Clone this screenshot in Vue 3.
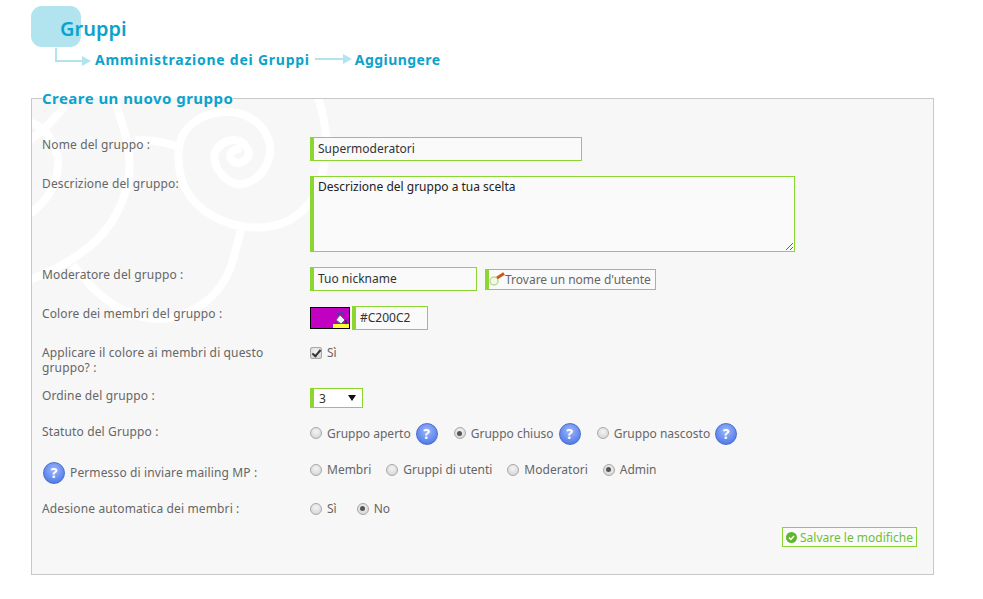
<script setup>
import { ref } from 'vue'

const nome = ref('Supermoderatori')
const descrizione = ref('Descrizione del gruppo a tua scelta')
const moderatore = ref('Tuo nickname')
const colore = ref('#C200C2')
const applica = ref(true)
const ordine = ref(3)
const statuto = ref('chiuso')
const permesso = ref('admin')
const adesione = ref('no')

const statuti = [
  { value: 'aperto', label: 'Gruppo aperto' },
  { value: 'chiuso', label: 'Gruppo chiuso' },
  { value: 'nascosto', label: 'Gruppo nascosto' }
]
const permessi = [
  { value: 'membri', label: 'Membri' },
  { value: 'gruppi', label: 'Gruppi di utenti' },
  { value: 'moderatori', label: 'Moderatori' },
  { value: 'admin', label: 'Admin' }
]
const adesioni = [
  { value: 'si', label: 'Sì' },
  { value: 'no', label: 'No' }
]

// curve of the background swirl, smoothed through its points
const smooth = (pts) => {
  let d = `M${pts[0][0]} ${pts[0][1]}`
  for (let i = 1; i < pts.length - 1; i++) {
    const mx = (pts[i][0] + pts[i + 1][0]) / 2
    const my = (pts[i][1] + pts[i + 1][1]) / 2
    d += ` Q${pts[i][0]} ${pts[i][1]} ${mx} ${my}`
  }
  const last = pts[pts.length - 1]
  return d + ` L${last[0]} ${last[1]}`
}

const swirl = [
  [[241, 148], [232, 150], [229, 158], [238, 165], [252, 155], [240, 138], [220, 143], [212, 158], [222, 177], [240, 187], [263, 175], [273, 148], [260, 122], [233, 110], [203, 115], [182, 132], [177, 158], [183, 188], [203, 212], [237, 227], [270, 228], [296, 218], [317, 195], [327, 155], [325, 122], [318, 97]],
  [[135, 140], [155, 140], [180, 147]],
  [[65, 106], [47, 127], [30, 140]],
  [[30, 122], [45, 128], [58, 152], [58, 175], [48, 198], [30, 214]],
  [[113, 96], [131, 145], [128, 192], [105, 235], [68, 263], [30, 280]],
  [[73, 265], [100, 300], [150, 322], [193, 313], [227, 283], [241, 230]]
].map(smooth)
</script>

<template>
  <div class="page">
    <header class="top">
      <span class="blob"></span>
      <h1>Gruppi</h1>
      <nav class="crumbs">
        <svg class="arrow-first" width="36" height="16" viewBox="0 0 36 16">
          <path d="M1 0V13H34" fill="none" stroke="#b2e4f0" stroke-width="2" />
          <path d="M27 8L36 13L27 18Z" fill="#b2e4f0" />
        </svg>
        <a>Amministrazione dei Gruppi</a>
        <svg class="arrow" width="37" height="10" viewBox="0 0 37 10">
          <path d="M0 5H30" stroke="#b2e4f0" stroke-width="2" />
          <path d="M28 0L37 5L28 10Z" fill="#b2e4f0" />
        </svg>
        <a class="last">Aggiungere</a>
      </nav>
    </header>

    <fieldset class="box">
      <legend>Creare un nuovo gruppo</legend>
      <div class="body">
        <svg class="swirl" width="901" height="476" viewBox="32 99 901 476">
          <path v-for="d in swirl" :key="d" :d="d" fill="none" stroke="#fff" stroke-width="8" />
        </svg>

        <div class="row">
          <label>Nome del gruppo :</label>
          <input class="field nome" type="text" v-model="nome" />
        </div>

        <div class="row">
          <label>Descrizione del gruppo:</label>
          <textarea class="field area" v-model="descrizione"></textarea>
        </div>

        <div class="row">
          <label>Moderatore del gruppo :</label>
          <div class="line">
            <input class="field mod" type="text" v-model="moderatore" />
            <button class="find" type="button">
              <svg width="20" height="14" viewBox="0 0 20 14">
                <circle cx="5" cy="9" r="4" fill="#f3f8ea" stroke="#b8dc92" stroke-width="1.5" />
                <path d="M8 6L15 1.5" stroke="#c9581c" stroke-width="3" />
              </svg>
              Trovare un nome d'utente
            </button>
          </div>
        </div>

        <div class="row">
          <label>Colore dei membri del gruppo :</label>
          <div class="line colors">
            <span class="swatch" :style="{ background: colore }">
              <span class="swatch-bar"></span>
              <svg class="bucket" width="12" height="13" viewBox="0 0 12 13">
                <path d="M5 3L10 8L6 12L1 8Z" fill="#f4f4f8" stroke="#5a5590" stroke-width="1" />
                <path d="M3 4L4 1L7 0.5L9 4" fill="none" stroke="#4a3f9c" stroke-width="1.5" />
                <path d="M10.5 8L11.5 12" stroke="#2f2a66" stroke-width="1.5" />
              </svg>
            </span>
            <input class="field hex" type="text" v-model="colore" />
          </div>
        </div>

        <div class="row row-check">
          <label>Applicare il colore ai membri di questo gruppo? :</label>
          <label class="opt opt-check">
            <input class="check" type="checkbox" v-model="applica" />
            Sì
          </label>
        </div>

        <div class="row row-order">
          <label>Ordine del gruppo :</label>
          <div class="select-wrap">
            <select class="field order" v-model="ordine">
              <option v-for="n in 5" :key="n" :value="n">{{ n }}</option>
            </select>
          </div>
        </div>

        <div class="row row-status">
          <label class="status-label">Statuto del Gruppo :</label>
          <div class="opts opts-status">
            <div class="opt-help" v-for="s in statuti" :key="s.value">
              <label class="opt">
                <input class="radio" type="radio" name="statuto" :value="s.value" v-model="statuto" />
                {{ s.label }}
              </label>
              <span class="help">?</span>
            </div>
          </div>
        </div>

        <div class="row row-mail">
          <label class="mail-label"><span class="help">?</span>Permesso di inviare mailing MP :</label>
          <div class="opts opts-mail">
            <label class="opt" v-for="p in permessi" :key="p.value">
              <input class="radio" type="radio" name="permesso" :value="p.value" v-model="permesso" />
              {{ p.label }}
            </label>
          </div>
        </div>

        <div class="row row-auto">
          <label>Adesione automatica dei membri :</label>
          <div class="opts opts-auto">
            <label class="opt" v-for="a in adesioni" :key="a.value">
              <input class="radio" type="radio" name="adesione" :value="a.value" v-model="adesione" />
              {{ a.label }}
            </label>
          </div>
        </div>

        <div class="actions">
          <button class="save" type="button">
            <svg width="11" height="11" viewBox="0 0 11 11">
              <circle cx="5.5" cy="5.5" r="5.5" fill="#5cb82a" />
              <path d="M3 5.6L4.9 7.5L8 3.9" fill="none" stroke="#fff" stroke-width="1.5" />
            </svg>
            Salvare le modifiche
          </button>
        </div>
      </div>
    </fieldset>
  </div>
</template>

<style>
html, body {
  margin: 0;
  background: #fff;
  overflow: hidden;
}
</style>

<style scoped>
.page {
  padding: 6px 49px 0 31px;
  font-family: "Noto Sans", "DejaVu Sans", sans-serif;
  font-size: 12px;
  color: #666;
}

/* title and breadcrumb */
.top {
  position: relative;
  height: 82px;
}
.blob {
  position: absolute;
  left: 0;
  top: 0;
  width: 50px;
  height: 41px;
  border-radius: 11px;
  background: #b2e4f0;
}
h1 {
  position: relative;
  margin: 0;
  padding: 10px 0 0 29px;
  font-size: 20px;
  line-height: 26px;
  font-weight: 600;
  color: #0ba3cd;
}
.crumbs {
  display: flex;
  align-items: center;
  height: 20px;
  margin-top: 7px;
  padding-left: 24px;
  font-size: 14px;
  font-weight: 700;
  letter-spacing: 0.75px;
  color: #0ba3cd;
}
.crumbs .last {
  letter-spacing: 0.45px;
}
.arrow-first {
  margin: -7px 4px 0 0;
  overflow: visible;
}
.arrow {
  margin: 0 3px 0 5px;
}

/* main box */
.box {
  margin: 0;
  padding: 0;
  border: 1px solid #c8c8c8;
  background: #f7f7f7;
}
legend {
  position: relative;
  z-index: 1;
  margin-left: 10px;
  padding: 0;
  font-size: 15px;
  line-height: 20px;
  font-weight: 700;
  letter-spacing: 0.45px;
  color: #0ba3cd;
}
.body {
  position: relative;
  display: flex;
  flex-direction: column;
  gap: 15px;
  margin-top: -9px;
  padding: 38px 16px 27px 10px;
  overflow: hidden;
}
.swirl {
  position: absolute;
  left: 0;
  top: 0;
}

.row {
  position: relative;
  display: grid;
  grid-template-columns: 268px 1fr;
  line-height: 15px;
}
.row > label:first-child {
  padding-right: 20px;
  letter-spacing: 0.13px;
}
.line {
  display: flex;
  align-items: center;
}

.field {
  box-sizing: border-box;
  display: block;
  margin: 0;
  padding: 0 4px 2px;
  border: 1px solid #8cd632;
  border-left-width: 4px;
  border-radius: 0;
  outline: none;
  background: #fafafa;
  font: inherit;
  color: #333;
}
.nome {
  width: 272px;
  height: 24px;
}
.area {
  width: 485px;
  height: 76px;
  padding: 2px 4px;
  color: #222;
}
.mod {
  width: 167px;
  height: 24px;
}
.find {
  display: flex;
  align-items: center;
  box-sizing: border-box;
  width: 171px;
  height: 21px;
  margin-left: 8px;
  padding: 0;
  border: 1px solid #8cd632;
  border-left-width: 4px;
  background: #fafafa;
  font: inherit;
  white-space: nowrap;
  color: #666;
}
.find svg {
  margin-right: -4px;
}

.colors {
  gap: 2px;
}
.swatch {
  box-sizing: border-box;
  position: relative;
  display: block;
  width: 40px;
  height: 22px;
  border: 1px solid #000;
}
.swatch-bar {
  position: absolute;
  right: 0;
  bottom: 0;
  width: 16px;
  height: 4px;
  background: #ffff33;
}
.bucket {
  position: absolute;
  right: 2px;
  bottom: 3px;
}
.hex {
  width: 76px;
  height: 24px;
}

.row-check {
  margin-bottom: -2px;
}
.opt {
  display: inline-flex;
  align-items: center;
  gap: 5px;
}
.opt-check {
  align-self: start;
}
.check,
.radio {
  appearance: none;
  box-sizing: border-box;
  position: relative;
  flex: none;
  width: 12px;
  height: 12px;
  margin: 0;
  border: 1px solid #a8a8a8;
  background: radial-gradient(circle at 50% 35%, #f4f4f4, #d0d0d0);
}
.check {
  border-radius: 2px;
}
.check:checked::after {
  content: "";
  position: absolute;
  left: 3px;
  top: 0;
  width: 3px;
  height: 7px;
  border: solid #333;
  border-width: 0 2px 2px 0;
  transform: rotate(40deg);
}
.radio {
  border-radius: 50%;
}
.radio:checked::after {
  content: "";
  position: absolute;
  left: 2.5px;
  top: 2.5px;
  width: 5px;
  height: 5px;
  border-radius: 50%;
  background: #555;
}

.select-wrap {
  position: relative;
  width: 53px;
}
.select-wrap::after {
  content: "";
  position: absolute;
  right: 7px;
  top: 7px;
  border: 4px solid transparent;
  border-top: 6px solid #111;
  border-bottom: 0;
  pointer-events: none;
}
.order {
  appearance: none;
  width: 53px;
  height: 20px;
  padding: 0 5px;
  background: #fff;
}

.opts {
  display: flex;
  align-items: center;
}
.opt-help {
  display: flex;
  align-items: flex-start;
}
.status-label {
  padding-top: 1px;
}
.opts-status {
  gap: 16px;
  align-items: flex-start;
}
.opts-status .opt {
  height: 20px;
}
.help {
  display: inline-flex;
  align-items: center;
  justify-content: center;
  flex: none;
  width: 22px;
  height: 22px;
  margin-left: 5px;
  border-radius: 50%;
  border: 1px solid #4a6fd0;
  box-sizing: border-box;
  background: radial-gradient(circle at 50% 35%, #9db8ff, #5c82ea 70%, #4166cf);
  font-size: 14px;
  line-height: 1;
  font-weight: 700;
  letter-spacing: 0;
  color: #fff;
}
.row-mail {
  height: 23px;
  margin-top: 1px;
}
.mail-label {
  display: flex;
  align-items: center;
  height: 23px;
}
.mail-label .help {
  margin: 0 5px 0 1px;
}
.opts-mail {
  gap: 15px;
  height: 15px;
  margin-top: 1px;
}
.row-auto {
  margin-top: 2px;
}
.opts-auto {
  gap: 20px;
}

.actions {
  display: flex;
  justify-content: flex-end;
  margin-top: -4px;
}
.save {
  display: flex;
  align-items: center;
  gap: 3px;
  box-sizing: border-box;
  width: 135px;
  height: 20px;
  padding: 0 3px;
  border: 1px solid #8cd632;
  background: #fafafa;
  font: inherit;
  white-space: nowrap;
  color: #6dbf3a;
}
</style>
